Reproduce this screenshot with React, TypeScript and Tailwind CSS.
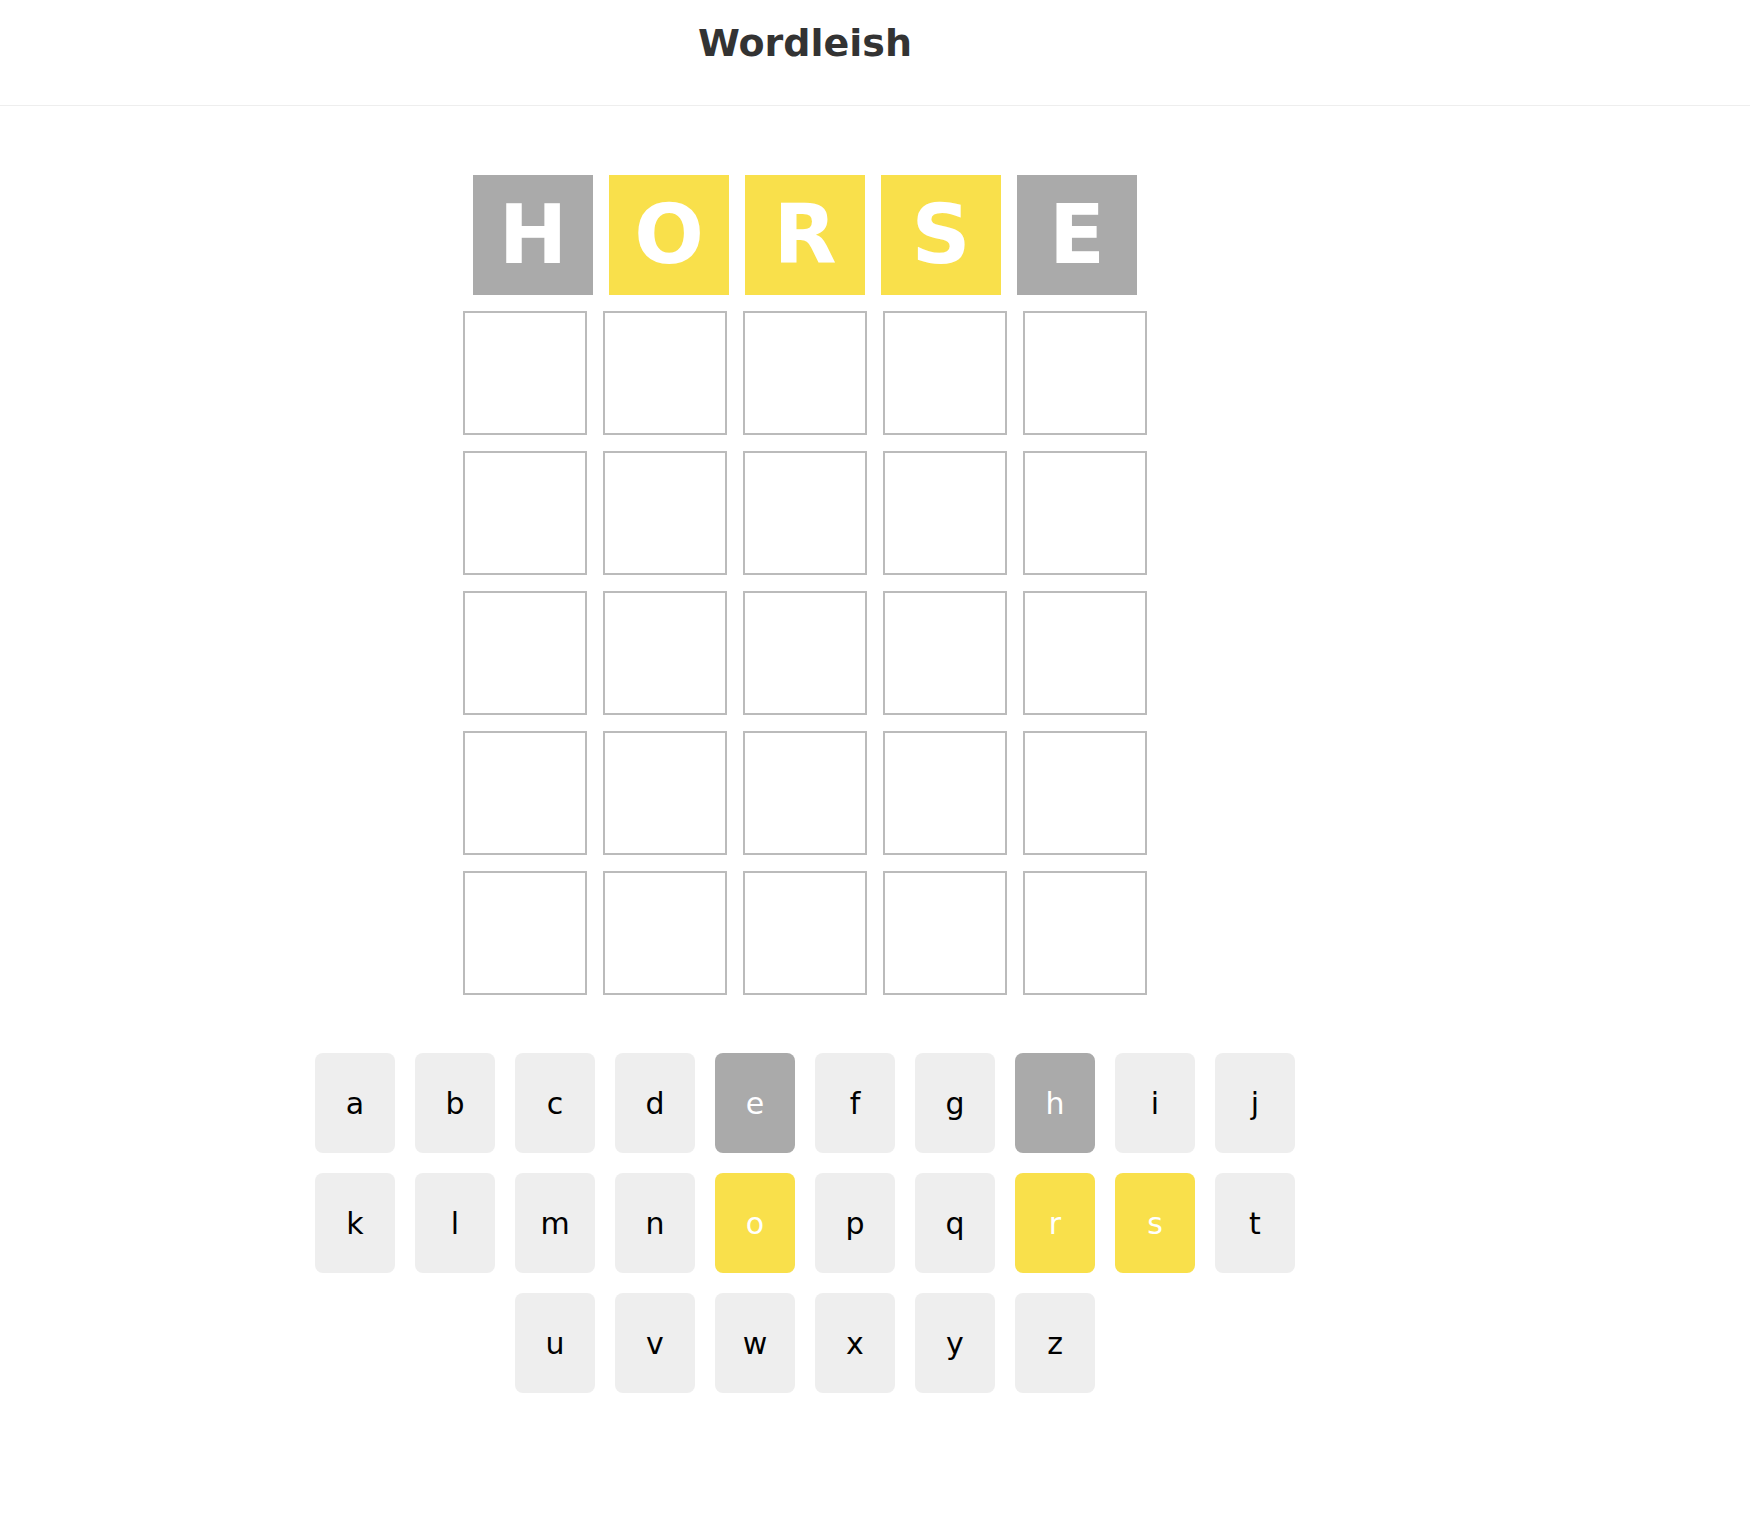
import React from 'react';

type Status = 'absent' | 'present' | 'none';

const guess: { letter: string; status: Status }[] = [
  { letter: 'H', status: 'absent' },
  { letter: 'O', status: 'present' },
  { letter: 'R', status: 'present' },
  { letter: 'S', status: 'present' },
  { letter: 'E', status: 'absent' },
];

const keyRows = [
  ['a', 'b', 'c', 'd', 'e', 'f', 'g', 'h', 'i', 'j'],
  ['k', 'l', 'm', 'n', 'o', 'p', 'q', 'r', 's', 't'],
  ['u', 'v', 'w', 'x', 'y', 'z'],
];

const keyStatus: Record<string, Status> = {
  e: 'absent',
  h: 'absent',
  o: 'present',
  r: 'present',
  s: 'present',
};

const font = { fontFamily: '"DejaVu Sans", Verdana, sans-serif' };

const Tile: React.FC<{ letter: string; status: Status }> = ({ letter, status }) => (
  <div
    className={`w-[120px] h-[120px] flex items-center justify-center text-white font-bold text-[82px] leading-none ${
      status === 'absent' ? 'bg-[#aaaaaa]' : 'bg-[#f9e04b]'
    }`}
  >
    {letter}
  </div>
);

const EmptyTile = () => <div className="w-[124px] h-[124px] border-2 border-[#bbbbbb]" />;

const Key: React.FC<{ letter: string }> = ({ letter }) => {
  const status = keyStatus[letter] || 'none';
  const color =
    status === 'absent'
      ? 'bg-[#aaaaaa] text-white'
      : status === 'present'
      ? 'bg-[#f9e04b] text-white'
      : 'bg-[#eeeeee] text-black';
  return (
    <div className={`w-[80px] h-[100px] rounded-lg flex items-center justify-center text-[30px] ${color}`}>
      {letter}
    </div>
  );
};

export default function App() {
  return (
    <div className="min-h-screen bg-white" style={font}>
      <header className="h-[106px] border-b border-[#eeeeee] pt-[19px]">
        <h1 className="w-[1610px] text-center text-[38px] leading-[48px] font-bold text-[#333333]">Wordleish</h1>
      </header>

      <main className="w-[1610px]">
        <div className="flex flex-col items-center gap-4 mt-[69px]">
          <div className="flex gap-4">
            {guess.map((g, i) => (
              <Tile key={i} letter={g.letter} status={g.status} />
            ))}
          </div>
          {[0, 1, 2, 3, 4].map((r) => (
            <div key={r} className="flex gap-4">
              {[0, 1, 2, 3, 4].map((c) => (
                <EmptyTile key={c} />
              ))}
            </div>
          ))}
        </div>

        <div className="flex flex-col items-center gap-5 mt-[58px]">
          {keyRows.map((row, i) => (
            <div key={i} className="flex gap-5">
              {row.map((k) => (
                <Key key={k} letter={k} />
              ))}
            </div>
          ))}
        </div>
      </main>
    </div>
  );
}
